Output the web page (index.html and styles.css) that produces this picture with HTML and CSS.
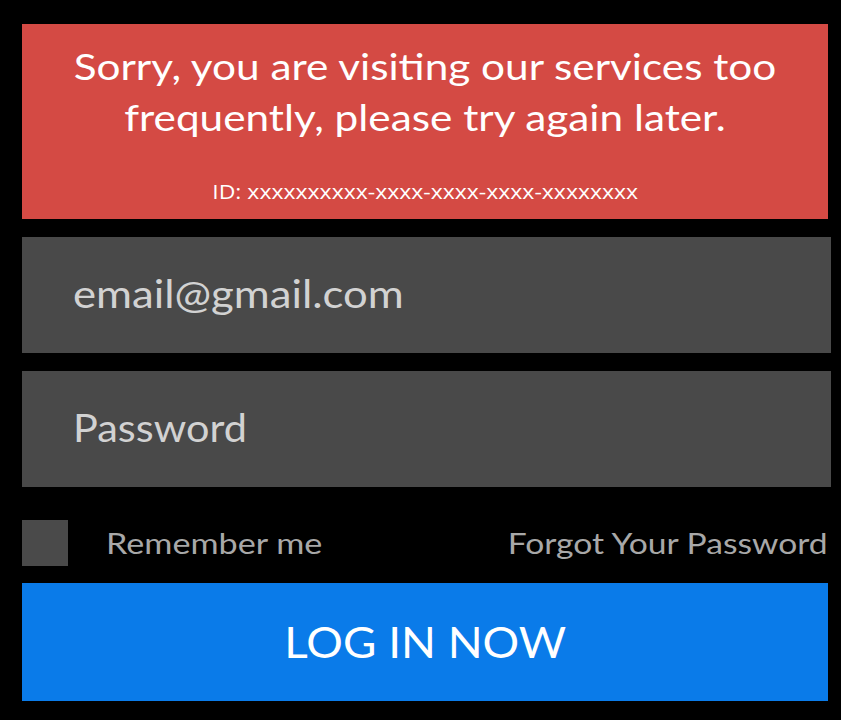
FILE: index.html
```html
<!DOCTYPE html>
<html>
<head>
<meta charset="utf-8">
<link rel="stylesheet" href="styles.css">
</head>
<body>
<div class="page">
  <div class="alert">
    <p class="alert-msg"><span class="alert-msg-inner">Sorry, you are visiting our services too frequently, please try again later.</span></p>
    <p class="alert-id"><span class="alert-id-inner">ID: xxxxxxxxxx-xxxx-xxxx-xxxx-xxxxxxxx</span></p>
  </div>
  <div class="field"><span class="field-text field-email">email@gmail.com</span></div>
  <div class="field"><span class="field-text field-pass">Password</span></div>
  <div class="options">
    <span class="check"></span>
    <span class="remember">Remember me</span>
    <span class="forgot">Forgot Your Password</span>
  </div>
  <div class="login"><span class="login-text">LOG IN NOW</span></div>
</div>
</body>
</html>
```
FILE: styles.css
```css
html, body {
  margin: 0;
  padding: 0;
  background: #000;
}
.page {
  width: 841px;
  height: 720px;
  padding: 24px 0 0 22px;
  box-sizing: border-box;
  font-family: Lato, "Open Sans", sans-serif;
}
.alert {
  width: 806px;
  height: 195px;
  background: #d44a44;
  color: #fff;
  text-align: center;
  box-sizing: border-box;
  padding-top: 17px;
}
.alert-msg {
  margin: 0;
  font-size: 36px;
  line-height: 51px;
}
.alert-msg-inner {
  display: inline-block;
  width: 610px;
  transform: scaleX(1.175);
  transform-origin: center;
}
.alert-id {
  margin: 37px 0 0;
  font-family: "Open Sans", sans-serif;
  font-size: 20px;
  line-height: 24px;
}
.alert-id-inner {
  display: inline-block;
  transform: scaleX(1.15);
  transform-origin: center;
}
.field {
  width: 809px;
  height: 116px;
  margin-top: 18px;
  background: #494949;
  display: flex;
  align-items: center;
  padding: 0 0 4px 51px;
  box-sizing: border-box;
}
.field-text {
  display: inline-block;
  color: #d2d2d2;
  font-size: 38px;
  transform-origin: left center;
}
.field-email {
  transform: scaleX(1.15);
}
.field-pass {
  transform: scaleX(1.09);
}
.options {
  width: 806px;
  margin-top: 33px;
  height: 46px;
  display: flex;
  align-items: center;
}
.check {
  width: 46px;
  height: 46px;
  background: #4a4a4a;
}
.remember,
.forgot {
  display: inline-block;
  color: #a8a8a8;
  font-size: 28px;
}
.remember {
  margin-left: 38px;
  transform: scaleX(1.22);
  transform-origin: left center;
}
.forgot {
  margin-left: auto;
  transform: scaleX(1.2);
  transform-origin: right center;
}
.login {
  width: 806px;
  height: 118px;
  margin-top: 17px;
  background: #0a7be9;
  color: #fff;
  font-size: 42px;
  display: flex;
  align-items: center;
  justify-content: center;
}
.login-text {
  display: inline-block;
  transform: scaleX(1.09);
}
```
